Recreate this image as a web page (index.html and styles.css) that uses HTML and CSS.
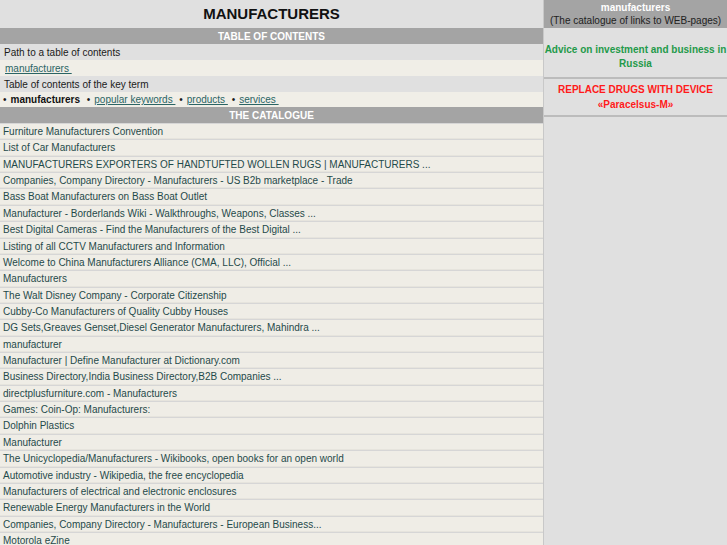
FILE: index.html
```html
<!DOCTYPE html>
<html>
<head>
<meta charset="utf-8">
<link rel="stylesheet" href="styles.css">
</head>
<body>
<div class="page">
  <div class="main">
    <h1 class="title">MANUFACTURERS</h1>
    <div class="bar">TABLE OF CONTENTS</div>
    <div class="row gray">Path to a table of contents</div>
    <div class="row cream"><a href="#">manufacturers&nbsp;</a></div>
    <div class="row gray">Table of contents of the key term</div>
    <div class="row cream keys">
      <span class="dot">•</span><b>manufacturers</b>
      <span class="dot">•</span><a href="#">popular keywords&nbsp;</a>
      <span class="dot">•</span><a href="#">products&nbsp;</a>
      <span class="dot">•</span><a href="#">services&nbsp;</a>
    </div>
    <div class="bar">THE CATALOGUE</div>
    <ul class="catalogue">
      <li>Furniture Manufacturers Convention</li>
      <li>List of Car Manufacturers</li>
      <li>MANUFACTURERS EXPORTERS OF HANDTUFTED WOLLEN RUGS | MANUFACTURERS ...</li>
      <li>Companies, Company Directory - Manufacturers - US B2b marketplace - Trade</li>
      <li>Bass Boat Manufacturers on Bass Boat Outlet</li>
      <li>Manufacturer - Borderlands Wiki - Walkthroughs, Weapons, Classes ...</li>
      <li>Best Digital Cameras - Find the Manufacturers of the Best Digital ...</li>
      <li>Listing of all CCTV Manufacturers and Information</li>
      <li>Welcome to China Manufacturers Alliance (CMA, LLC), Official ...</li>
      <li>Manufacturers</li>
      <li>The Walt Disney Company - Corporate Citizenship</li>
      <li>Cubby-Co Manufacturers of Quality Cubby Houses</li>
      <li>DG Sets,Greaves Genset,Diesel Generator Manufacturers, Mahindra ...</li>
      <li>manufacturer</li>
      <li>Manufacturer | Define Manufacturer at Dictionary.com</li>
      <li>Business Directory,India Business Directory,B2B Companies ...</li>
      <li>directplusfurniture.com - Manufacturers</li>
      <li>Games: Coin-Op: Manufacturers:</li>
      <li>Dolphin Plastics</li>
      <li>Manufacturer</li>
      <li>The Unicyclopedia/Manufacturers - Wikibooks, open books for an open world</li>
      <li>Automotive industry - Wikipedia, the free encyclopedia</li>
      <li>Manufacturers of electrical and electronic enclosures</li>
      <li>Renewable Energy Manufacturers in the World</li>
      <li>Companies, Company Directory - Manufacturers - European Business...</li>
      <li>Motorola eZine</li>
    </ul>
  </div>
  <div class="side">
    <div class="side-head">
      <div class="side-title">manufacturers</div>
      <div class="side-sub">(The catalogue of links to WEB-pages)</div>
    </div>
    <div class="side-box advice"><span class="nowrap">Advice on investment and business in</span><br>Russia</div>
    <div class="side-box drugs">REPLACE DRUGS WITH DEVICE<br>«Paracelsus-M»</div>
  </div>
</div>
</body>
</html>
```

FILE: styles.css
```css
html, body {
  margin: 0;
  padding: 0;
  background: #e0e0e0;
}
body {
  font-family: "Liberation Sans", Arial, sans-serif;
  font-size: 10px;
  color: #222;
}
.page {
  display: flex;
  width: 727px;
  height: 545px;
  overflow: hidden;
}
.main {
  width: 543px;
  flex: none;
  border-right: 1px solid #c8c8c8;
}
.title {
  margin: 0;
  height: 28px;
  line-height: 28px;
  text-align: center;
  font-size: 15px;
  font-weight: bold;
  color: #111;
  background: #e0e0e0;
}
.bar {
  height: 16px;
  line-height: 15px;
  padding-top: 1px;
  box-sizing: border-box;
  background: #a4a4a4;
  color: #fff;
  font-weight: bold;
  text-align: center;
}
.row {
  height: 16px;
  line-height: 15px;
  padding-top: 1px;
  box-sizing: border-box;
  padding-left: 4px;
  color: #1a1a1a;
}
.row.gray { background: #e0e0e0; }
.row.cream { background: #f0eee7; padding-left: 5px; }
.row a, .keys a {
  color: #2a6464;
  text-decoration: underline;
}
.keys {
  padding-left: 3px !important;
  height: 15px;
  line-height: 14px;
}
.keys .dot {
  margin: 0 4px 0 0;
}
.keys a { margin-right: 1px; }
.keys b { color: #111; margin-right: 4px; }
.catalogue {
  list-style: none;
  margin: 0;
  padding: 1px 0 0;
  display: flex;
  flex-direction: column;
  gap: 1px;
  background: #d6d6d6;
}
.catalogue li {
  height: 15.36px;
  line-height: 14.36px;
  padding-top: 1px;
  padding-left: 3px;
  background: #efede6;
  color: #1f4a4a;
  white-space: nowrap;
  border-bottom: 1px solid #e6e4dd;
  box-sizing: border-box;
}
.side {
  flex: 1;
  background: #e0e0e0;
}
.side-head {
  background: #a4a4a4;
  height: 28px;
  text-align: center;
  padding-top: 2px;
  box-sizing: border-box;
}
.side-title {
  color: #fff;
  font-weight: bold;
  line-height: 12px;
}
.side-sub {
  color: #222;
  line-height: 14px;
}
.side-box {
  text-align: center;
  font-weight: bold;
  border-bottom: 2px solid #bcbcbc;
}
.nowrap { white-space: nowrap; }
.advice {
  color: #1f9a4a;
  height: 51px;
  padding-top: 15px;
  line-height: 14px;
  box-sizing: border-box;
}
.drugs {
  color: #ff1a1a;
  height: 38px;
  padding-top: 3px;
  line-height: 15px;
  box-sizing: border-box;
}
```
